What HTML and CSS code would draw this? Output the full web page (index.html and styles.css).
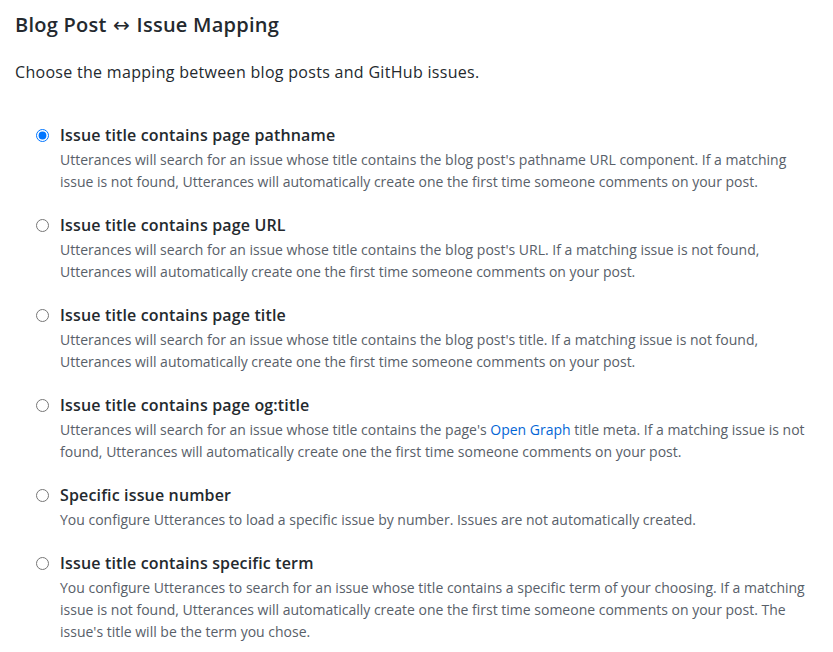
FILE: index.html
```html
<!DOCTYPE html>
<html lang="en">
<head>
<meta charset="utf-8">
<title>Blog Post ↔ Issue Mapping</title>
<link rel="stylesheet" href="styles.css">
</head>
<body>
<main class="page">
  <h3 class="title">Blog Post <span class="arrow">↔</span> Issue Mapping</h3>
  <p class="lead">Choose the mapping between blog posts and GitHub issues.</p>
  <div class="options">
    <div class="option">
      <input class="radio" type="radio" name="mapping" id="m1" checked>
      <label class="label" for="m1">Issue title contains page pathname</label>
      <p class="note">Utterances will search for an issue whose title contains the blog post's pathname URL component. If a matching issue is not found, Utterances will automatically create one the first time someone comments on your post.</p>
    </div>
    <div class="option">
      <input class="radio" type="radio" name="mapping" id="m2">
      <label class="label" for="m2">Issue title contains page URL</label>
      <p class="note">Utterances will search for an issue whose title contains the blog post's URL. If a matching issue is not found, Utterances will automatically create one the first time someone comments on your post.</p>
    </div>
    <div class="option">
      <input class="radio" type="radio" name="mapping" id="m3">
      <label class="label" for="m3">Issue title contains page title</label>
      <p class="note">Utterances will search for an issue whose title contains the blog post's title. If a matching issue is not found, Utterances will automatically create one the first time someone comments on your post.</p>
    </div>
    <div class="option">
      <input class="radio" type="radio" name="mapping" id="m4">
      <label class="label" for="m4">Issue title contains page og:title</label>
      <p class="note">Utterances will search for an issue whose title contains the page's <a class="link" href="#">Open Graph</a> title meta. If a matching issue is not found, Utterances will automatically create one the first time someone comments on your post.</p>
    </div>
    <div class="option">
      <input class="radio" type="radio" name="mapping" id="m5">
      <label class="label" for="m5">Specific issue number</label>
      <p class="note">You configure Utterances to load a specific issue by number. Issues are not automatically created.</p>
    </div>
    <div class="option">
      <input class="radio" type="radio" name="mapping" id="m6">
      <label class="label" for="m6">Issue title contains specific term</label>
      <p class="note">You configure Utterances to search for an issue whose title contains a specific term of your choosing. If a matching issue is not found, Utterances will automatically create one the first time someone comments on your post. The issue's title will be the term you chose.</p>
    </div>
  </div>
</main>
</body>
</html>
```

FILE: styles.css
```css
html, body {
  margin: 0;
  padding: 0;
  background: #fff;
}

body {
  font-family: "Segoe UI", "Open Sans", "Liberation Sans", sans-serif;
  color: #24292e;
}

.page {
  display: flex;
  flex-direction: column;
  padding: 10px 15px 0 15px;
}

.title {
  margin: 0;
  height: 30px;
  font-size: 20px;
  line-height: 30px;
  font-weight: 600;
  letter-spacing: 0.25px;
  color: #24292e;
}

.arrow {
  font-family: "DejaVu Sans", sans-serif;
  font-weight: 400;
  font-size: 20px;
  line-height: 1;
  margin: 0 1px;
}

.lead {
  margin: 20px 0 0 0;
  font-size: 16px;
  line-height: 24px;
  letter-spacing: 0.3px;
}

.options {
  display: flex;
  flex-direction: column;
  gap: 20px;
  margin-top: 39px;
}

.option {
  display: grid;
  grid-template-columns: 45px 1fr;
  row-gap: 2px;
}

.radio {
  grid-column: 1;
  grid-row: 1;
  justify-self: end;
  align-self: center;
  width: 13px;
  height: 13px;
  margin: 0 11px 0 0;
  accent-color: #0075ff;
}

.label {
  grid-column: 2;
  grid-row: 1;
  font-size: 16px;
  line-height: 24px;
  font-weight: 600;
  letter-spacing: 0.15px;
  color: #24292e;
}

.note {
  grid-column: 2;
  grid-row: 2;
  margin: 0;
  font-size: 14px;
  line-height: 22px;
  color: #586069;
}

.link {
  color: #0366d6;
  text-decoration: none;
}
```
